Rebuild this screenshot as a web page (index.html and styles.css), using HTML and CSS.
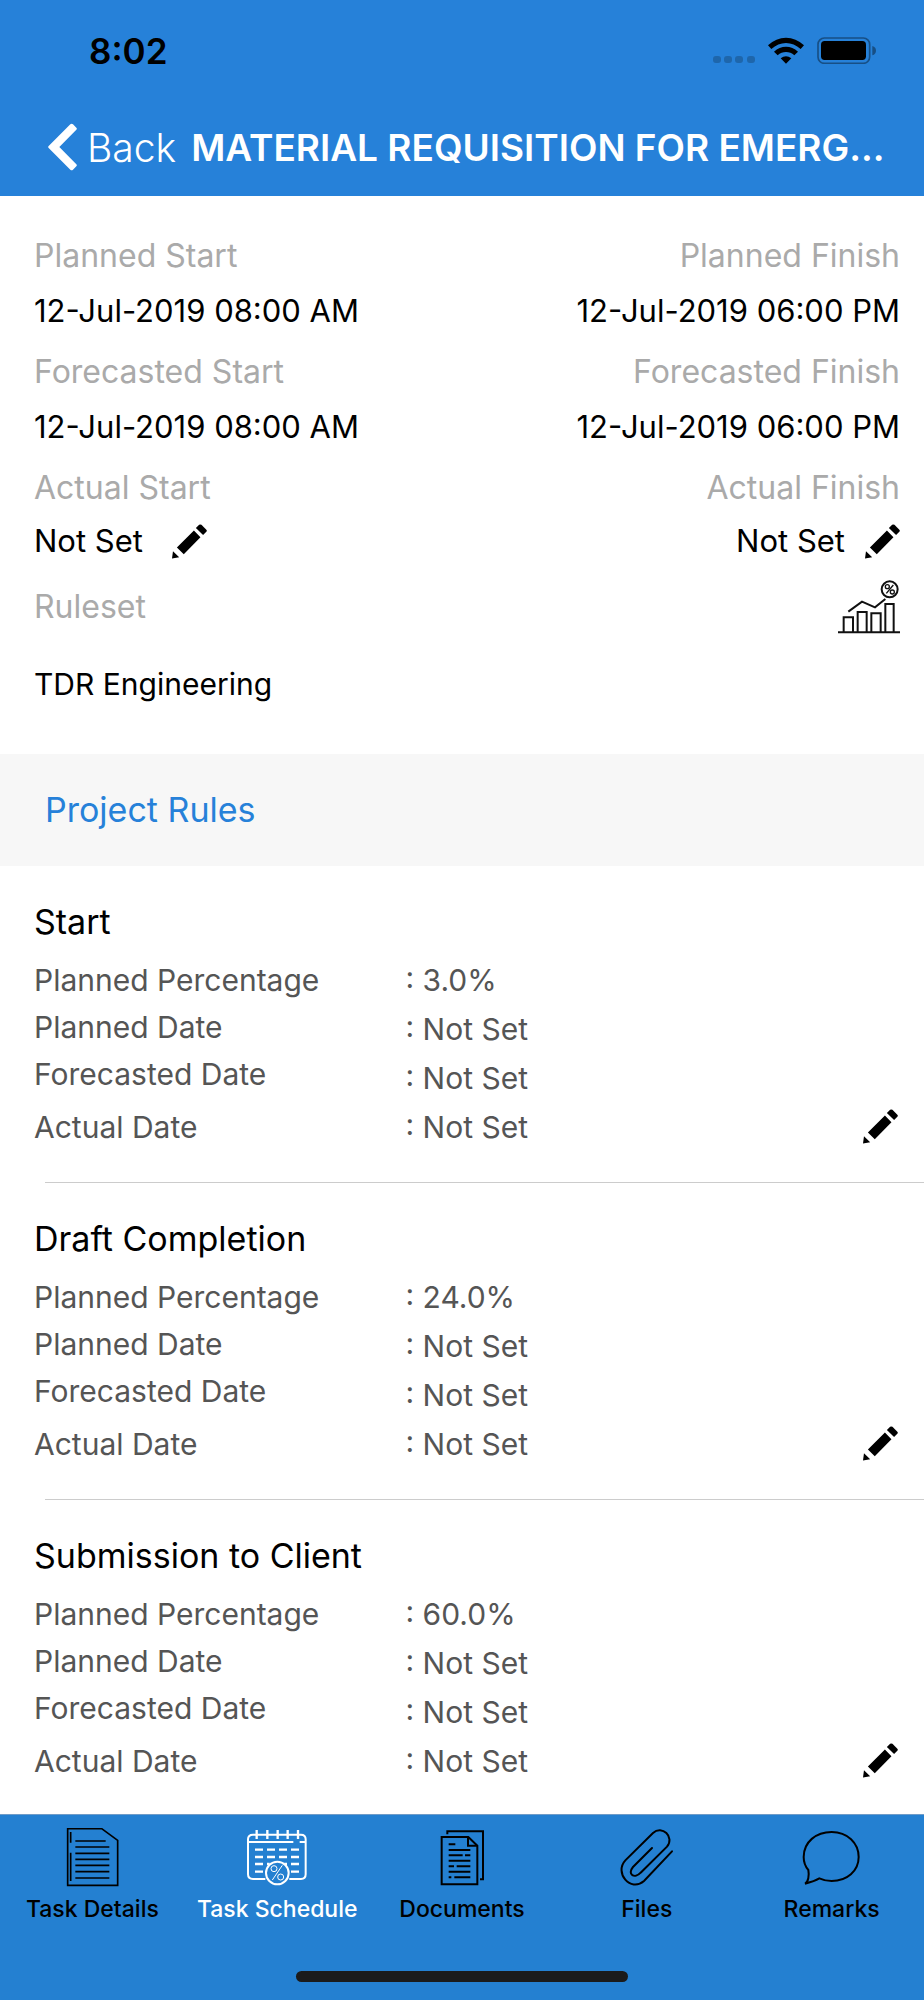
FILE: index.html
```
<!DOCTYPE html>
<html lang="en">
<head>
<meta charset="utf-8">
<meta name="viewport" content="width=device-width, initial-scale=1">
<title>Task Schedule</title>
<link rel="stylesheet" href="styles.css">
</head>
<body>
<svg class="defs" aria-hidden="true">
  <symbol id="pencil" viewBox="0 0 107 106">
    <path d="M67 19 87 40 36 92 15 71ZM3 83 22 101 0 105Z"/>
    <path d="M73 12 83 2Q86 0 90 2L105 17Q108 20 105 23L95 33Z"/>
  </symbol>
</svg>
<div class="app">
  <header class="header">
    <div class="status">
      <span class="time">8:02</span>
      <div class="indicators">
        <svg width="42" height="27" viewBox="0 0 42 27" fill="#1e66ab" aria-hidden="true"><rect x="0" y="19" width="8" height="7" rx="3"/><rect x="11" y="19" width="8" height="7" rx="3"/><rect x="22" y="19" width="8" height="7" rx="3"/><rect x="34" y="19" width="8" height="7" rx="3"/></svg>
        <svg width="36" height="27" viewBox="0 0 108 81" aria-hidden="true"><path d="M0 25Q24 2 54 2T108 25L98 36Q78 18 54 18T10 36ZM18 44Q34 29 54 29T90 44L79 55Q68 45 54 45T29 55ZM38 64Q54 52 70 64L54 80Z"/></svg>
        <svg width="59" height="27" viewBox="0 0 177 81" aria-hidden="true"><rect x="3" y="3" width="155" height="76" rx="19" fill="none" stroke="#174f85" stroke-width="5"/><rect x="12" y="12" width="135" height="57" rx="11"/><path d="M166 27Q177 31 177 41T166 55Z" fill="#174f85"/></svg>
      </div>
    </div>
    <nav class="nav">
      <button class="back" type="button">
        <svg width="29" height="48" viewBox="0 0 87 142" fill="#fff" aria-hidden="true"><path d="M2 68 67 3Q71 -1 75 3L85 13Q88 16 85 19L34 71 85 123Q88 126 85 129L75 139Q71 143 67 139L2 74Q-1 71 2 68Z"/></svg>
        Back
      </button>
      <h1 class="title">MATERIAL REQUISITION FOR EMERG...</h1>
    </nav>
  </header>

  <main class="main">
    <section class="details">
      <div class="pair">
        <div class="field"><span class="label">Planned Start</span><span class="value">12-Jul-2019 08:00 AM</span></div>
        <div class="field end"><span class="label">Planned Finish</span><span class="value">12-Jul-2019 06:00 PM</span></div>
      </div>
      <div class="pair">
        <div class="field"><span class="label">Forecasted Start</span><span class="value">12-Jul-2019 08:00 AM</span></div>
        <div class="field end"><span class="label">Forecasted Finish</span><span class="value">12-Jul-2019 06:00 PM</span></div>
      </div>
      <div class="pair editable">
        <div class="field"><span class="label">Actual Start</span><span class="value">Not Set<button class="edit" type="button" aria-label="Edit actual start"><svg class="pencil"><use href="#pencil"/></svg></button></span></div>
        <div class="field end"><span class="label">Actual Finish</span><span class="value">Not Set<button class="edit" type="button" aria-label="Edit actual finish"><svg class="pencil"><use href="#pencil"/></svg></button></span></div>
      </div>
      <div class="ruleset">
        <span class="label">Ruleset</span>
        <button class="edit" type="button" aria-label="Show progress chart">
          <svg class="chart" viewBox="0 0 186 160" fill="none" stroke="#111" stroke-width="6"><path d="M0 156H186M17 154V111H45V154M59 154V95H86V154M100 154V99H128V154M142 154V71H167V154"/><path d="M31 94 72 64 111 81 142 56"/><circle cx="155" cy="27" r="24"/><g stroke-width="4"><circle cx="148" cy="19" r="6"/><circle cx="163" cy="35" r="6"/><path d="M166 14 145 39"/></g></svg>
        </button>
      </div>
      <p class="value ruleset-name">TDR Engineering</p>
    </section>

    <h2 class="band">Project Rules</h2>

    <section class="rule">
      <h3 class="rule-title">Start</h3>
      <div class="rule-body">
        <ul class="names"><li>Planned Percentage</li><li>Planned Date</li><li>Forecasted Date</li><li>Actual Date</li></ul>
        <ul class="values"><li>: 3.0%</li><li>: Not Set</li><li>: Not Set</li><li>: Not Set</li></ul>
        <button class="edit" type="button" aria-label="Edit Start"><svg class="pencil"><use href="#pencil"/></svg></button>
      </div>
    </section>
    <hr class="divider">
    <section class="rule">
      <h3 class="rule-title">Draft Completion</h3>
      <div class="rule-body">
        <ul class="names"><li>Planned Percentage</li><li>Planned Date</li><li>Forecasted Date</li><li>Actual Date</li></ul>
        <ul class="values"><li>: 24.0%</li><li>: Not Set</li><li>: Not Set</li><li>: Not Set</li></ul>
        <button class="edit" type="button" aria-label="Edit Draft Completion"><svg class="pencil"><use href="#pencil"/></svg></button>
      </div>
    </section>
    <hr class="divider">
    <section class="rule">
      <h3 class="rule-title">Submission to Client</h3>
      <div class="rule-body">
        <ul class="names"><li>Planned Percentage</li><li>Planned Date</li><li>Forecasted Date</li><li>Actual Date</li></ul>
        <ul class="values"><li>: 60.0%</li><li>: Not Set</li><li>: Not Set</li><li>: Not Set</li></ul>
        <button class="edit" type="button" aria-label="Edit Submission to Client"><svg class="pencil"><use href="#pencil"/></svg></button>
      </div>
    </section>
  </main>

  <footer class="footer">
    <nav class="tabs">
      <a class="tab" href="#details">
        <svg class="tab-icon" viewBox="0 0 180 180"><g stroke-width="5"><path d="M17 2H119L167 37V172H17Z"/><path d="M26 12V44M26 74V159"/></g><path stroke-width="5" d="M40 39H131M40 57H142M40 76H142M40 94H142M40 112H142M40 131H142M40 150H142"/></svg>
        Task Details
      </a>
      <a class="tab active" href="#schedule" aria-current="page">
        <svg class="tab-icon" viewBox="0 0 180 180"><path stroke-width="6" d="M55 153H18Q3 153 3 139V34Q3 20 18 20H162Q176 20 176 34V139Q176 153 162 153H127M3 42H139M158 42H176"/><path stroke-width="7" d="M29 6V33M61 6V33M92 6V33M122 6V33M153 6V33"/><path stroke-width="7" d="M24 65H48M60 65H84M96 65H120M132 65H156M24 87H48M60 87H84M96 87H120M132 87H156M24 108H48M60 108H68M112 108H120M132 108H156M24 131H48M132 131H156"/><circle cx="91" cy="135" r="34" stroke-width="6"/><g stroke-width="3"><circle cx="81" cy="122" r="9"/><circle cx="101" cy="147" r="9"/><path d="M106 112 76 156"/></g></svg>
        Task Schedule
      </a>
      <a class="tab" href="#documents">
        <svg class="tab-icon" viewBox="0 0 180 180"><g stroke-width="6"><path d="M46 19V10H153V154H144"/><path d="M29 27H109L136 53V169H29Z"/><path d="M108 28V53H135"/><path d="M50 49H70M50 66H115M50 82H92M99 82H115M50 98H115M50 115H66M74 115H115M50 131H115M50 148H58M67 148H115"/></g></svg>
        Documents
      </a>
      <a class="tab" href="#files">
        <svg class="tab-icon" viewBox="0 0 180 180"><path stroke-width="6" stroke-linecap="round" d="M105 60 48 117C29 140 54 153 71 134L150 56C174 27 135-10 108 15L25 97C-9 134 40 194 81 159L165 70"/></svg>
        Files
      </a>
      <a class="tab" href="#remarks">
        <svg class="tab-icon" viewBox="0 0 180 180"><path stroke-width="6" stroke-linejoin="miter" d="M9 167C19 162 22 142 19 126 7 112 5 100 5 87 5 42 42 12 89 12S170 45 170 87 135 159 89 159C75 159 65 157 52 151 36 160 20 164 9 167Z"/></svg>
        Remarks
      </a>
    </nav>
    <div class="home-bar"></div>
  </footer>
</div>
</body>
</html>
```
FILE: styles.css
```
* { box-sizing: border-box; }
body, h1, h2, h3, p, ul { margin: 0; padding: 0; font-weight: 400; }
body {
  font-family: Inter, "Liberation Sans", sans-serif;
  background: #fff;
  color: #000;
}
ul { list-style: none; }
button { border: 0; padding: 0; background: none; font: inherit; color: inherit; }
svg { display: block; flex: none; }
.defs { position: absolute; width: 0; height: 0; }

.app { display: flex; flex-direction: column; min-height: 100vh; }

.header { background: #2681d9; }
.status {
  display: flex;
  align-items: center;
  justify-content: space-between;
  height: 98px;
  padding: 3px 48px 0 89px;
}
.time { font-size: 35px; font-weight: 600; }
.indicators { display: flex; gap: 13px; }
.nav {
  display: flex;
  align-items: center;
  height: 98px;
  padding: 0 36px 0 48px;
  gap: 15px;
  color: #fff;
}
.back { display: flex; align-items: center; gap: 10px; font-size: 39px; font-weight: 300; }
.title {
  min-width: 0;
  overflow: hidden;
  white-space: nowrap;
  font-size: 37px;
  font-weight: 600;
}

.main { flex: 1; }
.details { padding: 40px 24px 50px 34px; }
.pair { display: flex; justify-content: space-between; margin-bottom: 21px; }
.field { display: flex; flex-direction: column; gap: 15px; }
.end { align-items: flex-end; }
.label { font-size: 32px; line-height: 40px; color: #aaa; }
.value { display: flex; align-items: center; gap: 29px; font-size: 31px; line-height: 40px; }
.end .value { gap: 20px; }
.editable { margin-bottom: 19px; }
.editable .field { gap: 13px; }
.pencil { width: 35px; height: 35px; }
.ruleset { display: flex; align-items: center; justify-content: space-between; margin-bottom: 30px; }
.ruleset-name { font-size: 30px; }
.chart { width: 62px; height: 54px; }

.band {
  padding: 32px 45px;
  background: #f7f7f7;
  color: #2681d9;
  font-size: 34px;
  line-height: 48px;
}

.rule { padding: 34px 26px 30px 34px; }
.rule:last-child { padding-bottom: 28px; }
.rule-title { margin-bottom: 12px; font-size: 34px; line-height: 44px; }
.rule-body {
  display: grid;
  grid-template-columns: 43% 1fr auto;
  align-items: center;
  font-size: 30px;
  color: #555;
}
.names { line-height: 47px; }
.names li:last-child { margin-top: 6px; }
.values { line-height: 49px; }
.rule-body .edit { align-self: end; margin-bottom: 8px; color: #000; }
.divider { margin: 0 0 0 45px; border: 0; border-top: 1px solid #ccc; }

.footer {
  display: flex;
  flex-direction: column;
  align-items: center;
  gap: 48px;
  padding: 13px 0 18px;
  border-top: 1px solid #6f9cc8;
  background: #2480d1;
}
.tabs { display: grid; grid-template-columns: repeat(5, 1fr); width: 100%; }
.tab {
  display: flex;
  flex-direction: column;
  align-items: center;
  gap: 7px;
  color: #000;
  font-size: 23px;
  font-weight: 500;
  line-height: 28px;
  text-decoration: none;
}
.tab.active { color: #fff; }
.tab-icon { width: 60px; height: 60px; fill: none; stroke: currentColor; }
.home-bar { width: 36%; height: 11px; border-radius: 6px; background: #1b1b1b; }
```
